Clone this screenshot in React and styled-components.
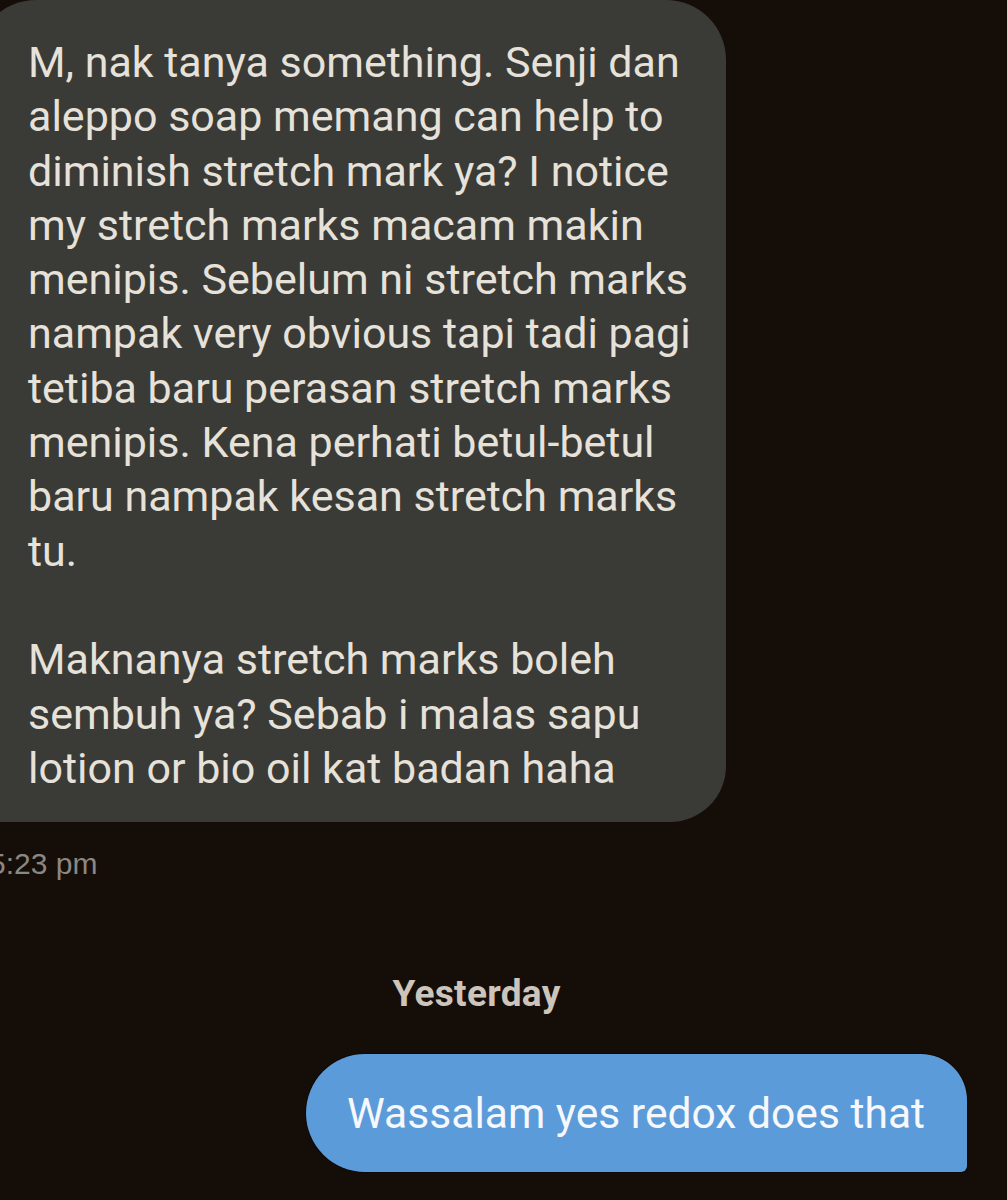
import React from "react";
import styled, { createGlobalStyle } from "styled-components";

const GlobalStyle = createGlobalStyle`
  html, body {
    margin: 0;
    padding: 0;
    background: #150e08;
    overflow: hidden;
  }
  * { box-sizing: border-box; }
`;

const Page = styled.div`
  width: 1007px;
  height: 1200px;
  display: flex;
  flex-direction: column;
  background: #150e08;
  overflow: hidden;
  font-family: Roboto, "Noto Sans", sans-serif;
`;

const IncomingBubble = styled.div`
  margin-left: -24px;
  width: 750px;
  background: #3a3a37;
  border-radius: 60px 60px 56px 0;
  padding: 35px 20px 27px 52px;
  color: #e6e2da;
  font-size: 43px;
  line-height: 54.3px;
`;

const Line = styled.span`
  display: block;
  white-space: pre;
  min-height: 54.3px;
`;

const Timestamp = styled.div`
  margin-top: 26px;
  margin-left: -11px;
  font-family: "Liberation Sans", Arial, sans-serif;
  font-size: 30px;
  line-height: 32px;
  color: #8c8782;
`;

const DateRow = styled.div`
  margin-top: 93px;
  display: flex;
  justify-content: center;
  padding-right: 54px;
  font-size: 37px;
  line-height: 42px;
  font-weight: 700;
  letter-spacing: 0.3px;
  color: #cdc5bb;
`;

const OutgoingRow = styled.div`
  margin-top: 39px;
  display: flex;
  justify-content: flex-end;
  padding-right: 40px;
`;

const OutgoingBubble = styled.div`
  height: 118px;
  display: flex;
  align-items: center;
  padding: 0 42px 0 41px;
  background: #5b9bd9;
  border-radius: 59px 46px 6px 59px;
  box-shadow: 0 0 0 1px rgba(0, 0, 0, 0.35);
  color: #f6f8fb;
  font-size: 42.6px;
  white-space: nowrap;
`;

const lines = [
  "M, nak tanya something. Senji dan",
  "aleppo soap memang can help to",
  "diminish stretch mark ya? I notice",
  "my stretch marks macam makin",
  "menipis. Sebelum ni stretch marks",
  "nampak very obvious tapi tadi pagi",
  "tetiba baru perasan stretch marks",
  "menipis. Kena perhati betul-betul",
  "baru nampak kesan stretch marks",
  "tu.",
  "",
  "Maknanya stretch marks boleh",
  "sembuh ya? Sebab i malas sapu",
  "lotion or bio oil kat badan haha",
];

export default function App() {
  return (
    <>
      <GlobalStyle />
      <Page>
        <IncomingBubble>
          {lines.map((l, i) => (
            <Line key={i}>{l}</Line>
          ))}
        </IncomingBubble>
        <Timestamp>5:23 pm</Timestamp>
        <DateRow>Yesterday</DateRow>
        <OutgoingRow>
          <OutgoingBubble>Wassalam yes redox does that</OutgoingBubble>
        </OutgoingRow>
      </Page>
    </>
  );
}
